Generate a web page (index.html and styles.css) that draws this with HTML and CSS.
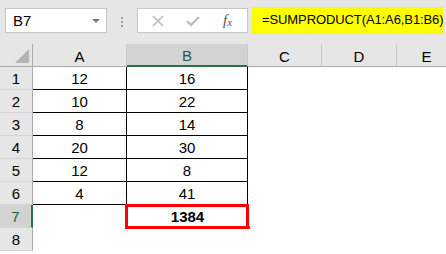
FILE: index.html
```html
<!DOCTYPE html>
<html lang="en">
<head>
    <meta charset="UTF-8">
    <meta name="viewport" content="width=device-width, initial-scale=1.0">
    <title>SUMPRODUCT</title>
    <link rel="stylesheet" href="styles.css">
</head>
<body>

    <!-- Barra de fórmulas -->
    <div class="toolbar">
        <div class="name-box">
            <span>B7</span>
            <span class="drop"></span>
        </div>
        <div class="grip"><i></i><i></i><i></i></div>
        <div class="fx-box">
            <svg class="btn" width="14" height="14" viewBox="0 0 14 14">
                <path d="M2 2 L12 12 M12 2 L2 12" stroke="#b9b9b9" stroke-width="1.6" fill="none"/>
            </svg>
            <svg class="btn" width="16" height="14" viewBox="0 0 16 14">
                <path d="M2 7 L6 11 L14 3" stroke="#b9b9b9" stroke-width="2" fill="none"/>
            </svg>
            <span class="fx">f<sub>x</sub></span>
        </div>
        <div class="formula">=SUMPRODUCT(A1:A6,B1:B6)</div>
    </div>

    <!-- Hoja -->
    <div class="sheet">
        <div class="corner"><span class="tri"></span></div>
        <div class="col-head">A</div>
        <div class="col-head active">B</div>
        <div class="col-head">C</div>
        <div class="col-head">D</div>
        <div class="col-head">E</div>

        <div class="row-head">1</div>
        <div class="cell data">12</div>
        <div class="cell data">16</div>
        <div class="cell"></div><div class="cell"></div><div class="cell"></div>

        <div class="row-head">2</div>
        <div class="cell data">10</div>
        <div class="cell data">22</div>
        <div class="cell"></div><div class="cell"></div><div class="cell"></div>

        <div class="row-head">3</div>
        <div class="cell data">8</div>
        <div class="cell data">14</div>
        <div class="cell"></div><div class="cell"></div><div class="cell"></div>

        <div class="row-head">4</div>
        <div class="cell data">20</div>
        <div class="cell data">30</div>
        <div class="cell"></div><div class="cell"></div><div class="cell"></div>

        <div class="row-head">5</div>
        <div class="cell data">12</div>
        <div class="cell data">8</div>
        <div class="cell"></div><div class="cell"></div><div class="cell"></div>

        <div class="row-head">6</div>
        <div class="cell data">4</div>
        <div class="cell data">41</div>
        <div class="cell"></div><div class="cell"></div><div class="cell"></div>

        <div class="row-head active">7</div>
        <div class="cell"></div>
        <div class="cell result">1384</div>
        <div class="cell"></div><div class="cell"></div><div class="cell"></div>

        <div class="row-head">8</div>
        <div class="cell"></div><div class="cell"></div>
        <div class="cell"></div><div class="cell"></div><div class="cell"></div>
    </div>

</body>
</html>
```

FILE: styles.css
```css
body {
    margin: 0;
    width: 446px;
    height: 254px;
    overflow: hidden;
    background: #fff;
    font-family: 'Liberation Sans', Arial, sans-serif;
    font-size: 15px;
    color: #000;
}

/* Barra superior */
.toolbar {
    height: 44px;
    background: #e6e6e6;
    display: flex;
    align-items: flex-start;
    padding: 8px 0 0 5px;
    box-sizing: border-box;
}

.name-box {
    width: 102px;
    height: 25px;
    box-sizing: border-box;
    background: #fff;
    border: 1px solid #c6c6c6;
    display: flex;
    align-items: center;
    justify-content: space-between;
    padding: 0 6px 0 7px;
}

.drop {
    width: 0;
    height: 0;
    border-left: 4px solid transparent;
    border-right: 4px solid transparent;
    border-top: 4px solid #7a7a7a;
}

.grip {
    width: 30px;
    display: flex;
    flex-direction: column;
    align-items: center;
    gap: 2px;
    padding-top: 9px;
}

.grip i {
    width: 2px;
    height: 2px;
    background: #a0a0a0;
}

.fx-box {
    width: 111px;
    height: 25px;
    box-sizing: border-box;
    background: #fff;
    border: 1px solid #c6c6c6;
    display: flex;
    align-items: center;
    padding-left: 13px;
    gap: 20px;
}

.fx {
    font-family: 'Liberation Serif', serif;
    font-style: italic;
    font-size: 15px;
    color: #555;
    margin-left: 2px;
}

.fx sub {
    font-size: 11px;
    vertical-align: -1px;
}

.formula {
    margin-left: 4px;
    width: 191px;
    height: 27px;
    margin-top: -1px;
    box-sizing: border-box;
    background: #ffff00;
    padding: 5px 0 0 10px;
    font-size: 13px;
    letter-spacing: -0.1px;
    white-space: nowrap;
}

/* Rejilla */
.sheet {
    display: grid;
    grid-template-columns: 33px 94px 121px 74px 75px 60px;
    grid-auto-rows: 23px;
}

.sheet > div {
    box-sizing: border-box;
    display: flex;
    align-items: center;
    justify-content: center;
}

.corner {
    background: #e6e6e6;
    border-right: 1px solid #ababab;
    border-bottom: 1px solid #ababab;
    position: relative;
}

.tri {
    position: absolute;
    right: 3px;
    bottom: 3px;
    width: 0;
    height: 0;
    border-left: 14px solid transparent;
    border-bottom: 14px solid #b4b4b4;
}

.col-head {
    background: #e6e6e6;
    border-right: 1px solid #c9c9c9;
    border-bottom: 1px solid #ababab;
    padding-top: 2px;
}

.col-head.active {
    background: #d2d2d2;
    color: #1e5c3a;
    border-bottom: 2px solid #217346;
}

.row-head {
    background: #e6e6e6;
    border-right: 1px solid #ababab;
    border-bottom: 1px solid #d4d4d4;
}

.row-head.active {
    background: #d2d2d2;
    color: #1e5c3a;
    border-right: 2px solid #217346;
}

.data {
    border-right: 1px solid #000;
    border-bottom: 1px solid #000;
}

/* Celda del resultado */
.result {
    font-weight: bold;
    position: relative;
}

.result::after {
    content: '';
    position: absolute;
    top: -1px;
    left: -2px;
    right: -1px;
    bottom: -1px;
    border: 3px solid #ff0000;
}

.result::before {
    content: '';
    position: absolute;
    right: -2px;
    bottom: -1px;
    width: 4px;
    height: 3px;
    background: #217346;
}
```
